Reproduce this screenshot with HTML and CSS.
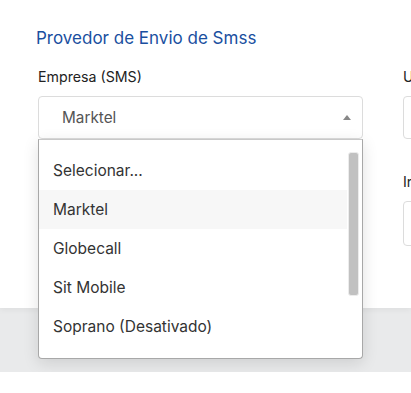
FILE: index.html
```html
<!DOCTYPE html>
<html lang="pt">
<head>
<meta charset="utf-8">
<link rel="stylesheet" href="styles.css">
</head>
<body>
<div class="card">
  <h2 class="title">Provedor de Envio de Smss</h2>
  <div class="grid">
    <div class="field">
      <label class="label">Empresa (SMS)</label>
      <div class="select">
        <span class="select-value">Marktel</span>
        <span class="arrow"></span>
      </div>
      <div class="dropdown">
        <div class="list">
          <ul class="options">
            <li class="option">Selecionar...</li>
            <li class="option active">Marktel</li>
            <li class="option">Globecall</li>
            <li class="option">Sit Mobile</li>
            <li class="option">Soprano (Desativado)</li>
          </ul>
          <div class="scrollbar"><div class="thumb"></div></div>
        </div>
      </div>
    </div>
    <div class="col-right">
      <div class="field">
        <label class="label">Usuário</label>
        <div class="input"></div>
      </div>
      <div class="field second">
        <label class="label">Intervalo</label>
        <div class="input tall"></div>
      </div>
    </div>
  </div>
</div>
<div class="band"></div>
</body>
</html>
```
FILE: styles.css
```css
* { box-sizing: border-box; }
html, body { margin: 0; padding: 0; background: #fff; }
body {
  font-family: Inter, Roboto, "Noto Sans", sans-serif;
  color: #222;
  width: 411px;
  overflow: hidden;
}
.card {
  background: #fff;
  height: 308px;
  padding: 26px 0 0 36px;
  box-shadow: 0 2px 6px rgba(0,0,0,0.05);
  position: relative;
  z-index: 1;
}
.title {
  margin: 0;
  font-size: 17px;
  font-weight: 400;
  line-height: 24px;
  color: #1a4f9f;
}
.grid {
  display: grid;
  grid-template-columns: 325px 200px;
  column-gap: 40px;
  margin-top: 17px;
  padding-left: 2px;
}
.field { position: relative; }
.label {
  display: block;
  font-size: 14.2px;
  line-height: 20px;
  color: #222;
  margin-bottom: 9px;
}
.select {
  height: 43px;
  border: 1px solid #dcdcdc;
  border-radius: 4px;
  display: flex;
  align-items: center;
  justify-content: space-between;
  padding: 0 11px 0 23px;
  background: #fff;
}
.select-value { font-size: 15.3px; color: #555; }
.arrow {
  width: 0; height: 0;
  border-left: 4px solid transparent;
  border-right: 4px solid transparent;
  border-bottom: 5px solid #888;
}
.dropdown {
  position: absolute;
  left: 0;
  top: 72px;
  width: 325px;
  height: 220px;
  background: #fff;
  border: 1px solid #a8a8a8;
  border-top-color: #c8c8c8;
  border-radius: 0 0 4px 4px;
  box-shadow: 0 4px 16px rgba(0,0,0,0.12);
  padding: 11px 0 14px;
  z-index: 5;
}
.list { display: flex; height: 195px; }
.options { list-style: none; margin: 0; padding: 0; flex: 1; }
.option {
  height: 39px;
  line-height: 39px;
  padding-left: 14px;
  font-size: 15.5px;
  color: #333;
}
.option.active { background: #f7f7f7; }
.scrollbar { width: 15px; padding: 1px 2px 0 1px; }
.thumb {
  width: 11px;
  height: 144px;
  background: #c1c1c1;
  border: 1px solid #ececec;
  border-radius: 3px;
}
.input {
  height: 43px;
  border: 1px solid #dcdcdc;
  border-radius: 4px;
}
.input.tall { height: 45px; }
.second { margin-top: 33px; }
.band {
  height: 64px;
  background: #e9eaeb;
}
```
